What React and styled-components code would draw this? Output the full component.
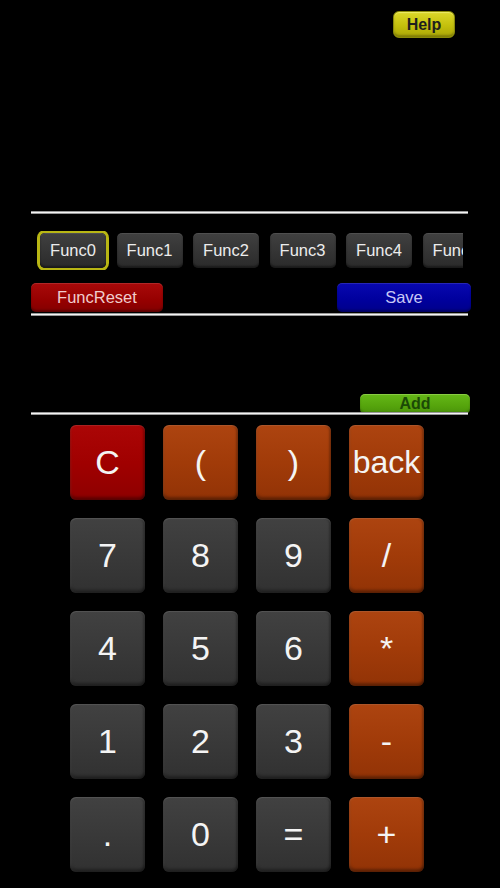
import React from "react";
import styled, { createGlobalStyle, css } from "styled-components";

const Global = createGlobalStyle`
  html, body { margin: 0; padding: 0; background: #000; }
  body { font-family: "Liberation Sans", Arial, sans-serif; }
  #root { background: #000; min-height: 888px; }
`;

const Page = styled.div`
  width: 500px;
  height: 888px;
  overflow: hidden;
  background: #000;
  display: flex;
  flex-direction: column;
`;

const HelpBar = styled.div`
  display: flex;
  justify-content: flex-end;
  padding: 11px 45px 0 0;
`;

const HelpButton = styled.button`
  width: 62px;
  height: 27px;
  border: 1px solid #8a8a08;
  border-radius: 6px;
  background: linear-gradient(#dcd82a, #c4c00c 55%, #aaa607);
  box-shadow: inset 0 1px 1px rgba(255, 255, 170, 0.5), inset 0 -2px 2px rgba(0, 0, 0, 0.25);
  color: #1e1e1e;
  font-family: "Liberation Sans", Arial, sans-serif;
  font-weight: bold;
  font-size: 16px;
  padding: 0;
`;

const Divider = styled.div`
  height: 3px;
  margin: ${(p) => p.$top || 0}px 32px 0 31px;
  background: linear-gradient(#6a6a6a, #f4f4f4 50%, #6a6a6a);
`;

const FuncStrip = styled.div`
  margin: 17px 0 0 31px;
  width: 432px;
  height: 39px;
  padding: 2px 0 0 9px;
  box-sizing: border-box;
  overflow: hidden;
  display: flex;
  gap: 10.5px;
`;

const FuncButton = styled.button`
  flex: 0 0 66px;
  height: 35px;
  border: none;
  border-radius: 5px;
  background: linear-gradient(#404040, #333 60%, #2a2a2a);
  box-shadow: inset 0 1px 0 rgba(255, 255, 255, 0.08), inset 0 -2px 2px rgba(0, 0, 0, 0.4)
    ${(p) => (p.$active ? ", 0 0 0 3px #b8b614" : "")};
  color: #ececec;
  font-family: "Liberation Sans", Arial, sans-serif;
  font-size: 16.5px;
  padding: 0;
  white-space: nowrap;
  overflow: hidden;
  text-align: center;
`;

const ActionRow = styled.div`
  display: flex;
  justify-content: space-between;
  margin: 13px 29px 0 31px;
`;

const tones = {
  red: css`
    background: linear-gradient(#a80a0a, #960000 60%, #820000);
    color: #f0cccc;
  `,
  blue: css`
    background: linear-gradient(#0808b0, #00009c 60%, #00008a);
    color: #c8c8f6;
  `,
};

const ActionButton = styled.button`
  width: ${(p) => p.$w}px;
  height: 29px;
  border: none;
  border-radius: 5px;
  ${(p) => tones[p.$tone]};
  box-shadow: inset 0 1px 0 rgba(255, 255, 255, 0.12), inset 0 -2px 2px rgba(0, 0, 0, 0.3);
  font-family: "Liberation Sans", Arial, sans-serif;
  font-size: 16.5px;
  padding: 0;
`;

const AddRow = styled.div`
  display: flex;
  justify-content: flex-end;
  margin: 78px 30px 0 0;
`;

const AddButton = styled.button`
  width: 110px;
  height: 20px;
  border: none;
  border-radius: 5px;
  background: linear-gradient(#66b818, #55a40c 60%, #4a920a);
  box-shadow: inset 0 1px 0 rgba(220, 255, 170, 0.3), inset 0 -2px 2px rgba(0, 0, 0, 0.25);
  color: #1b4a06;
  font-family: "Liberation Sans", Arial, sans-serif;
  font-weight: bold;
  font-size: 16px;
  line-height: 20px;
  padding: 0;
`;

const Keypad = styled.div`
  display: grid;
  grid-template-columns: repeat(4, 75px);
  grid-auto-rows: 75px;
  gap: 18px;
  margin: 10px 0 0 70px;
`;

const keyTones = {
  gray: css`
    background: linear-gradient(#414141, #393939 50%, #313131);
  `,
  orange: css`
    background: linear-gradient(#ad4410, #a13b09 50%, #923306);
  `,
  red: css`
    background: linear-gradient(#ab0606, #a00000 50%, #8e0000);
  `,
};

const Key = styled.button`
  border: none;
  border-radius: 6px;
  ${(p) => keyTones[p.$tone]};
  box-shadow: inset 0 1px 1px rgba(255, 255, 255, 0.12), inset 0 -3px 3px rgba(0, 0, 0, 0.35),
    inset 2px 0 2px rgba(255, 255, 255, 0.04), inset -2px 0 2px rgba(0, 0, 0, 0.2);
  color: #f4f4f4;
  font-family: "Liberation Sans", Arial, sans-serif;
  font-size: ${(p) => (p.$small ? 32 : 34)}px;
  padding: 0;
  display: flex;
  align-items: center;
  justify-content: center;
`;

const funcs = ["Func0", "Func1", "Func2", "Func3", "Func4", "Func5"];

const keys = [
  ["C", "red"], ["(", "orange"], [")", "orange"], ["back", "orange"],
  ["7", "gray"], ["8", "gray"], ["9", "gray"], ["/", "orange"],
  ["4", "gray"], ["5", "gray"], ["6", "gray"], ["*", "orange"],
  ["1", "gray"], ["2", "gray"], ["3", "gray"], ["-", "orange"],
  [".", "gray"], ["0", "gray"], ["=", "gray"], ["+", "orange"],
];

export default function App() {
  return (
    <>
      <Global />
      <Page>
        <HelpBar>
          <HelpButton>Help</HelpButton>
        </HelpBar>
        <Divider $top={173} />
        <FuncStrip>
          {funcs.map((f, i) => (
            <FuncButton key={f} $active={i === 0}>
              {f}
            </FuncButton>
          ))}
        </FuncStrip>
        <ActionRow>
          <ActionButton $w={132} $tone="red">FuncReset</ActionButton>
          <ActionButton $w={134} $tone="blue">Save</ActionButton>
        </ActionRow>
        <Divider $top={1} />
        <AddRow>
          <AddButton>Add</AddButton>
        </AddRow>
        <Divider $top={-2} />
        <Keypad>
          {keys.map(([k, tone]) => (
            <Key key={k} $tone={tone} $small={k === "back"}>
              {k}
            </Key>
          ))}
        </Keypad>
      </Page>
    </>
  );
}
